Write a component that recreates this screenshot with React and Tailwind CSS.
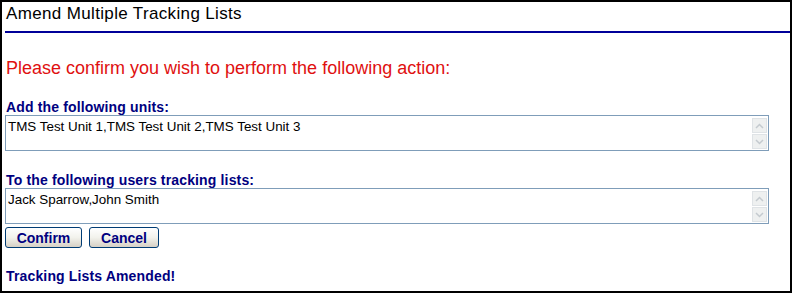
import React from "react";

function ScrollArrows() {
  return (
    <div className="absolute right-[1px] top-[2px] flex flex-col gap-[1px]">
      <div className="w-[15px] h-[15px] bg-[#eef0f0] border border-[#dfe3e6] flex items-center justify-center">
        <svg width="9" height="6" viewBox="0 0 9 6"><path d="M1 5 L4.5 1.5 L8 5" fill="none" stroke="#c4cacf" strokeWidth="1.5" /></svg>
      </div>
      <div className="w-[15px] h-[15px] bg-[#eef0f0] border border-[#dfe3e6] flex items-center justify-center">
        <svg width="9" height="6" viewBox="0 0 9 6"><path d="M1 1 L4.5 4.5 L8 1" fill="none" stroke="#c4cacf" strokeWidth="1.5" /></svg>
      </div>
    </div>
  );
}

function Box({ text }) {
  return (
    <div className="relative w-[764px] h-[36px] border border-[#7f9db9] bg-white">
      <div className="pl-[2px] pt-[3px] text-[13.4px] leading-[15px] text-black">{text}</div>
      <ScrollArrows />
    </div>
  );
}

function Btn({ children, w }) {
  return (
    <button className={`${w} h-[21px] rounded-[3px] border border-[#003c74] bg-gradient-to-b from-[#ffffff] via-[#f2f2ec] to-[#d6d0c5] text-[14px] font-bold text-[#000080] leading-[16px]`}>
      {children}
    </button>
  );
}

export default function App() {
  return (
    <div className="w-[792px] h-[293px] border-2 border-black bg-white" style={{ fontFamily: '"Liberation Sans", Arial, sans-serif' }}>
      <div className="pl-[4px] pt-[3px] text-[17px] leading-[17px] tracking-[0.35px] text-black">Amend Multiple Tracking Lists</div>
      <div className="ml-[3px] mt-[9px] h-[2px] bg-[#000099]" />
      <div className="pl-[3px]">
        <div className="mt-[25px] pl-[1px] text-[18px] leading-[21px] text-[#e01010]">Please confirm you wish to perform the following action:</div>
        <div className="mt-[20px] pl-[1px] text-[14px] font-bold leading-[16px] tracking-[0.15px] text-[#000080]">Add the following units:</div>
        <Box text="TMS Test Unit 1,TMS Test Unit 2,TMS Test Unit 3" />
        <div className="mt-[21px] pl-[1px] text-[14px] font-bold leading-[16px] tracking-[0.15px] text-[#000080]">To the following users tracking lists:</div>
        <Box text="Jack Sparrow,John Smith" />
        <div className="mt-[3px] flex gap-[7px]">
          <Btn w="w-[77px]">Confirm</Btn>
          <Btn w="w-[70px]">Cancel</Btn>
        </div>
        <div className="mt-[20px] pl-[1px] text-[14px] font-bold leading-[16px] tracking-[0.15px] text-[#000080]">Tracking Lists Amended!</div>
      </div>
    </div>
  );
}
